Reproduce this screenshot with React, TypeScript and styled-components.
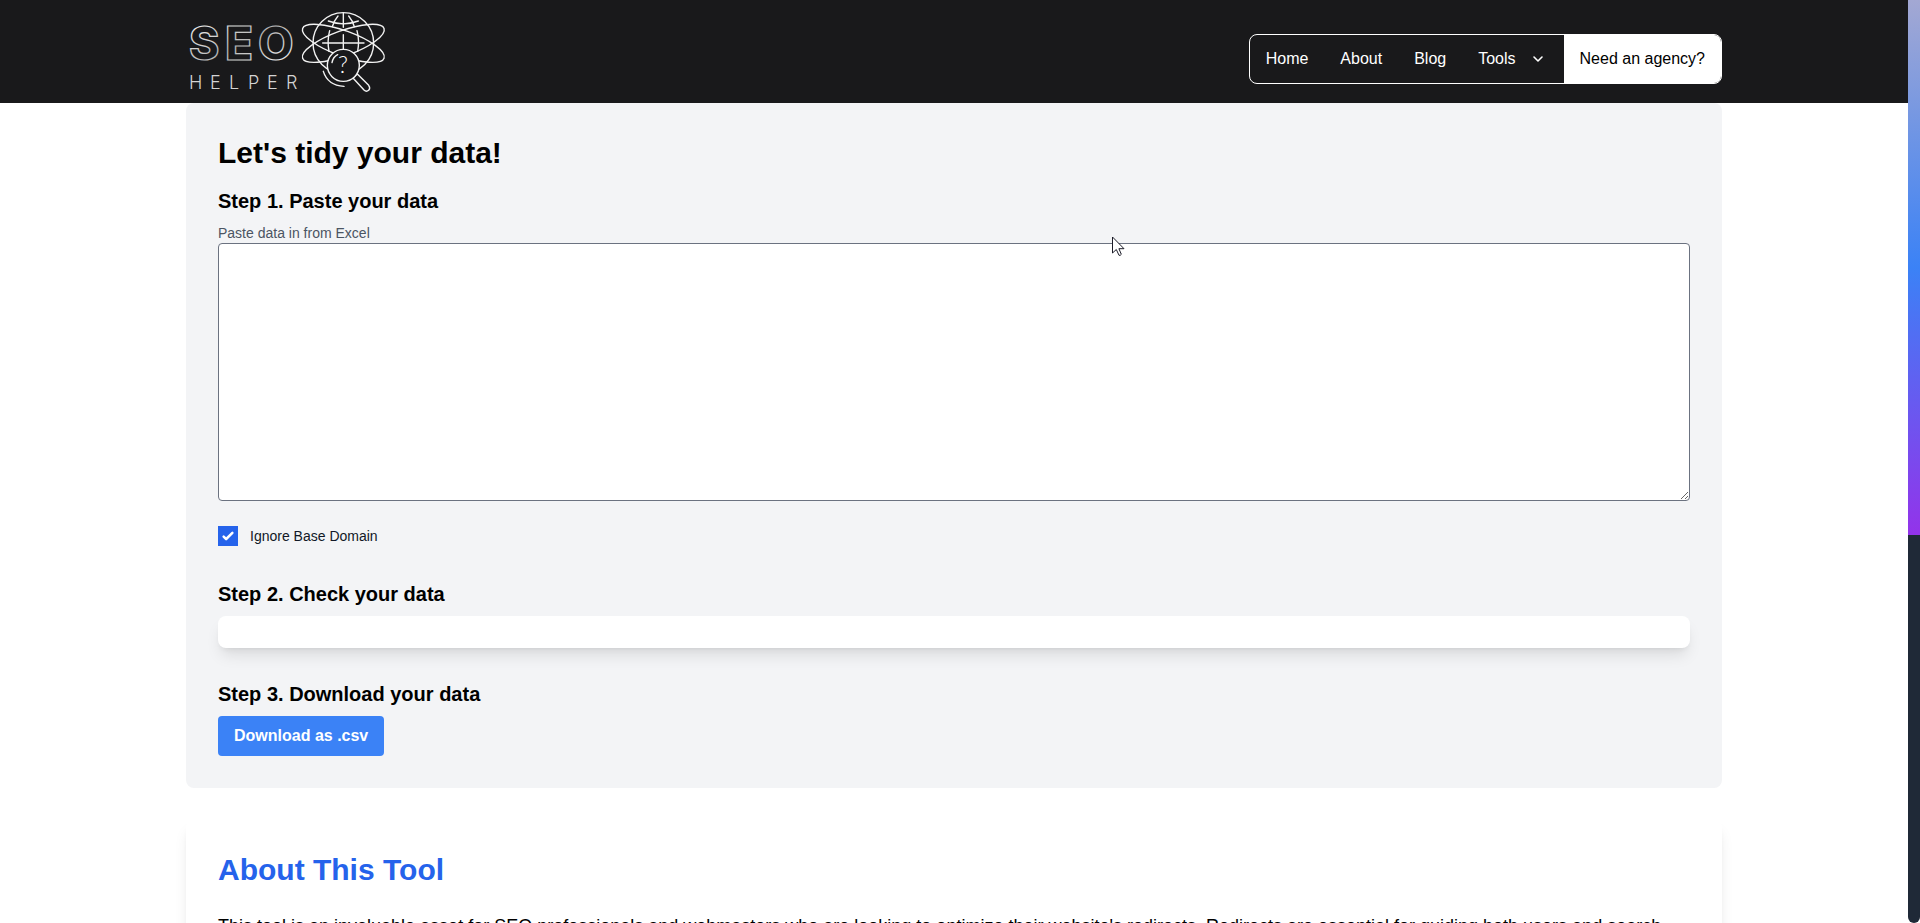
import React from "react";
import styled, { createGlobalStyle } from "styled-components";

const GlobalStyle = createGlobalStyle`
  *, *::before, *::after { box-sizing: border-box; }
  body {
    margin: 0;
    background: #fff;
    color: #000;
    font-family: "Liberation Sans", Arial, sans-serif;
    font-size: 16px;
    line-height: 24px;
  }
  h1, h2, p { margin: 0; }
`;

const Shell = styled.div`
  display: flex;
  height: 100vh;
  overflow: hidden;
`;

const Page = styled.div`
  flex: 1;
  min-width: 0;
  position: relative;
  overflow-y: auto;
  scrollbar-width: none;
`;

const ScrollTrack = styled.div`
  flex: none;
  width: 12px;
  background: #1f2937;
  border-radius: 0 0 6px 6px;
`;

const ScrollThumb = styled.div`
  height: 58%;
  background: linear-gradient(#a3a8d3, #3b82f6 50%, #9333ea);
`;

const Header = styled.header`
  background: #19191b;
`;

const Container = styled.div`
  max-width: 1536px;
  margin: 0 auto;
`;

const HeaderRow = styled(Container)`
  display: flex;
  align-items: center;
  justify-content: space-between;
  height: 103px;
`;

const LogoLink = styled.a`
  display: block;
  color: #fff;
`;

const LogoArt = styled.svg`
  display: block;
`;

const Nav = styled.nav`
  display: flex;
  height: 50px;
  margin-top: 15px;
  border: 1px solid #fff;
  border-radius: 8px;
  overflow: hidden;
`;

const itemStyles = `
  display: flex;
  align-items: center;
  gap: 12px;
  padding: 0 16px;
  border: 0;
  font: inherit;
  text-decoration: none;
  white-space: nowrap;
`;

const NavLink = styled.a<{ $solid?: boolean }>`
  ${itemStyles}
  color: ${(p) => (p.$solid ? "#000" : "#fff")};
  background: ${(p) => (p.$solid ? "#fff" : "transparent")};
`;

const NavButton = styled.button`
  ${itemStyles}
  color: #fff;
  background: transparent;
`;

const Card = styled.section`
  padding: 32px;
  background: #f3f4f6;
  border-radius: 8px;
`;

const AboutCard = styled.section`
  margin-top: 32px;
  padding: 32px;
  background: #fff;
  border-radius: 8px;
  box-shadow: 0 10px 15px -3px rgba(0, 0, 0, 0.1), 0 4px 6px -4px rgba(0, 0, 0, 0.1);
`;

const Title = styled.h1`
  font-size: 30px;
  line-height: 36px;
  font-weight: 700;
  margin-bottom: 16px;
`;

const AboutTitle = styled(Title)`
  color: #2563eb;
  margin-bottom: 24px;
`;

const StepTitle = styled.h2`
  font-size: 20px;
  line-height: 28px;
  font-weight: 700;
  margin-bottom: 8px;
`;

const FieldLabel = styled.label`
  display: block;
  font-size: 14px;
  line-height: 20px;
  color: #4b5563;
`;

const DataInput = styled.textarea`
  display: block;
  width: 100%;
  padding: 8px 12px;
  border: 1px solid #6b7280;
  border-radius: 4px;
  background: #fff;
  font: inherit;
  resize: vertical;
`;

const CheckRow = styled.div`
  display: flex;
  align-items: center;
  gap: 12px;
  margin: 25px 0 34px;
`;

const CheckBox = styled.input`
  appearance: none;
  width: 20px;
  height: 20px;
  margin: 0;
  background: #2563eb
    url("data:image/svg+xml,%3Csvg viewBox='0 0 16 16' fill='white' xmlns='http://www.w3.org/2000/svg'%3E%3Cpath d='M12.207 4.793a1 1 0 010 1.414l-5 5a1 1 0 01-1.414 0l-2-2a1 1 0 011.414-1.414L6.5 9.086l4.293-4.293a1 1 0 011.414 0z'/%3E%3C/svg%3E")
    center / 100% no-repeat;
`;

const CheckLabel = styled.label`
  font-size: 14px;
  line-height: 20px;
  color: #111827;
`;

const Preview = styled.div`
  padding: 16px;
  margin-bottom: 32px;
  background: #fff;
  border-radius: 8px;
  box-shadow: 0 10px 15px -3px rgba(0, 0, 0, 0.1), 0 4px 6px -4px rgba(0, 0, 0, 0.1);
`;

const DownloadButton = styled.button`
  display: block;
  padding: 8px 16px;
  border: 0;
  border-radius: 4px;
  background: #3b82f6;
  color: #fff;
  font: inherit;
  font-weight: 700;
`;

const AboutText = styled.p`
  font-size: 18px;
  line-height: 28px;
`;

const Pointer = styled.svg`
  position: absolute;
  left: 1112px;
  top: 236px;
  pointer-events: none;
`;

function Logo() {
  return (
    <LogoArt width="206" height="103" viewBox="0 0 206 103" role="img" aria-label="SEO Helper">
      <defs>
        <linearGradient id="metal" x1="0" y1="0" x2="1" y2="1">
          <stop offset="0" stopColor="#ffffff" />
          <stop offset="0.5" stopColor="#b8b8b8" />
          <stop offset="1" stopColor="#ffffff" />
        </linearGradient>
      </defs>
      <g fontFamily="Inter, sans-serif">
        <text x="3 39 72" y="60" fontSize="46" fontWeight="800" fill="none" stroke="url(#metal)" strokeWidth="1.2">
          SEO
        </text>
        <text x="3 24 43 62 81 100" y="89" fontSize="18" fontWeight="300" fill="#d4d4d4">
          HELPER
        </text>
      </g>
      <g transform="translate(-6 0) scale(.33333)" fill="none" stroke="#f2f2f2" strokeWidth="4.2" strokeLinecap="round">
        <circle cx="490" cy="129" r="91" />
        <ellipse cx="490" cy="130" rx="130" ry="38" transform="rotate(20 490 130)" />
        <ellipse cx="490" cy="130" rx="130" ry="38" transform="rotate(-20 490 130)" />
        <path d="M490 38V82M490 104V148M428 129H552M445 63Q490 80 535 63" />
        <path d="M474 48Q462 62 457 80M506 48Q518 62 523 80M449 92Q441 122 447 154M531 92Q539 122 533 154" />
        <path d="M519 234L532 222L566 256Q572 264 566 271Q559 277 552 270Z" fill="#19191b" />
        <circle cx="490" cy="196" r="48" fill="#19191b" />
        <path d="M456 188Q459 171 473 164M430 214Q443 256 492 259" />
      </g>
      <text x="157" y="73" textAnchor="middle" fontFamily="Lato, sans-serif" fontSize="23" fontWeight="300" fill="#fff">
        ?
      </text>
    </LogoArt>
  );
}

export default function App() {
  return (
    <>
      <GlobalStyle />
      <Shell>
        <Page>
          <Header>
            <HeaderRow>
              <LogoLink href="#">
                <Logo />
              </LogoLink>
              <Nav>
                <NavLink href="#">Home</NavLink>
                <NavLink href="#about">About</NavLink>
                <NavLink href="#blog">Blog</NavLink>
                <NavButton type="button">
                  Tools
                  <svg
                    width="20"
                    height="20"
                    viewBox="0 0 20 20"
                    fill="none"
                    stroke="currentColor"
                    strokeWidth="1.6"
                    strokeLinecap="round"
                    strokeLinejoin="round"
                    aria-hidden="true"
                  >
                    <path d="M6 8L10 12L14 8" />
                  </svg>
                </NavButton>
                <NavLink href="#agency" $solid>
                  Need an agency?
                </NavLink>
              </Nav>
            </HeaderRow>
          </Header>
          <Container as="main">
            <Card>
              <Title>Let's tidy your data!</Title>
              <StepTitle>Step 1. Paste your data</StepTitle>
              <FieldLabel htmlFor="data">Paste data in from Excel</FieldLabel>
              <DataInput id="data" rows={10} />
              <CheckRow>
                <CheckBox id="ignore" type="checkbox" defaultChecked />
                <CheckLabel htmlFor="ignore">Ignore Base Domain</CheckLabel>
              </CheckRow>
              <StepTitle>Step 2. Check your data</StepTitle>
              <Preview />
              <StepTitle>Step 3. Download your data</StepTitle>
              <DownloadButton type="button">Download as .csv</DownloadButton>
            </Card>
            <AboutCard id="about">
              <AboutTitle as="h2">About This Tool</AboutTitle>
              <AboutText>
                This tool is an invaluable asset for SEO professionals and webmasters who are looking to optimize their
                website's redirects. Redirects are essential for guiding both users and search
              </AboutText>
            </AboutCard>
          </Container>
          <Pointer width="14" height="21" viewBox="0 0 14 21" aria-hidden="true">
            <path
              d="M.5 1V17L4.3 13.5L7 19.3Q8.300 19.800 9.300 18.300L6.900 12.700H12Z"
              fill="#fff"
              stroke="#1c1c28"
            />
          </Pointer>
        </Page>
        <ScrollTrack>
          <ScrollThumb />
        </ScrollTrack>
      </Shell>
    </>
  );
}
